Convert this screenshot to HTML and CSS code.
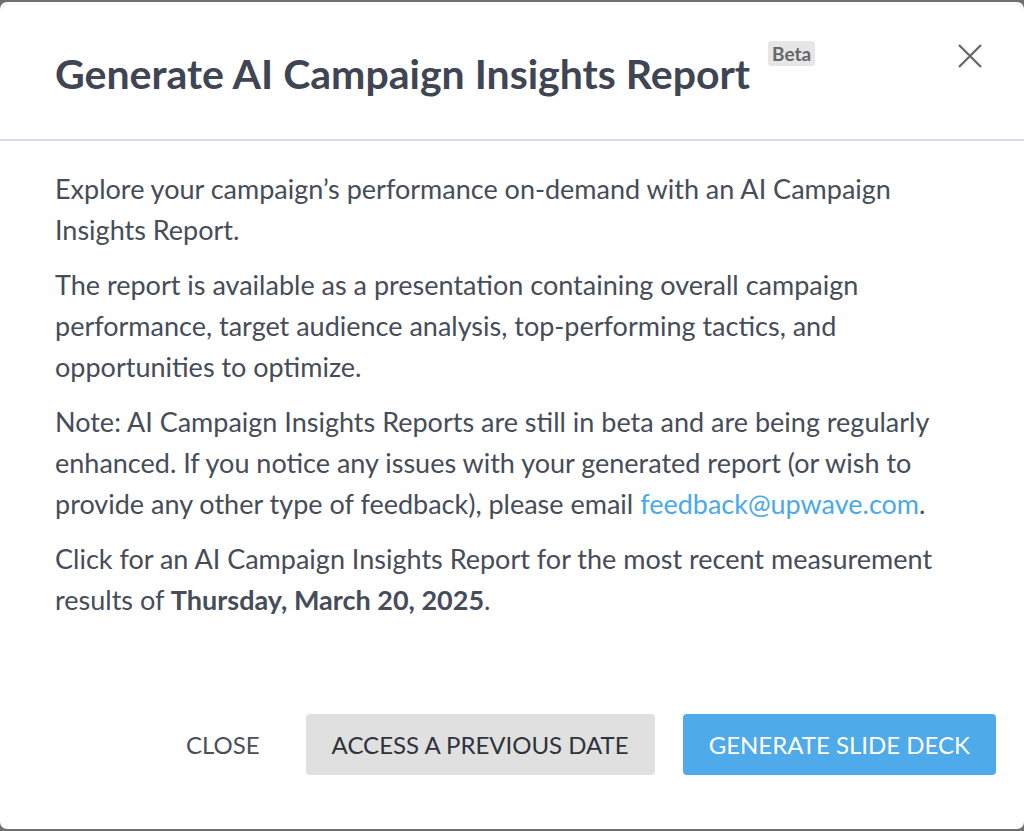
FILE: index.html
```html
<!DOCTYPE html>
<html>
<head>
<meta charset="utf-8">
<link rel="stylesheet" href="styles.css">
</head>
<body>
<div class="modal">
  <header class="modal-header">
    <h1 class="title">Generate AI Campaign Insights Report <span class="badge">Beta</span></h1>
    <button class="close-x" aria-label="Close">
      <svg width="26" height="26" viewBox="0 0 26 26"><path d="M2 2 L24 24 M24 2 L2 24" stroke="#6b6b6b" stroke-width="2.4" fill="none"/></svg>
    </button>
  </header>
  <section class="modal-body">
    <p>Explore your campaign’s performance on-demand with an AI Campaign Insights Report.</p>
    <p>The report is available as a presentation containing overall campaign performance, target audience analysis, top-performing tactics, and opportunities to optimize.</p>
    <p>Note: AI Campaign Insights Reports are still in beta and are being regularly enhanced. If you notice any issues with your generated report (or wish to provide any other type of feedback), please email <a href="#">feedback@upwave.com</a>.</p>
    <p>Click for an AI Campaign Insights Report for the most recent measurement results of <strong>Thursday, March 20, 2025</strong>.</p>
  </section>
  <footer class="modal-footer">
    <button class="btn btn-text">CLOSE</button>
    <button class="btn btn-gray">ACCESS A PREVIOUS DATE</button>
    <button class="btn btn-blue">GENERATE SLIDE DECK</button>
  </footer>
</div>
</body>
</html>
```
FILE: styles.css
```css
html, body {
  margin: 0;
  padding: 0;
  height: 831px;
  overflow: hidden;
}
body {
  background: #707070;
  font-family: Lato, "Open Sans", sans-serif;
  padding-top: 2px;
  box-sizing: border-box;
}
.modal {
  background: #fff;
  height: 827px;
  border-radius: 7px;
  display: flex;
  flex-direction: column;
}
.modal-header {
  height: 137px;
  border-bottom: 2px solid #d3deea;
  display: flex;
  align-items: flex-start;
  justify-content: space-between;
  padding: 0 41px 0 55px;
  box-sizing: content-box;
}
.title {
  margin: 46px 0 0;
  font-size: 41px;
  font-weight: 700;
  color: #3f4552;
  line-height: 52px;
  letter-spacing: 0;
  display: flex;
  align-items: flex-start;
}
.badge {
  margin-left: 18px;
  margin-top: -7px;
  background: #e6e6e6;
  color: #666;
  font-size: 19px;
  font-weight: 700;
  line-height: 25px;
  padding: 0 4px;
  border-radius: 3px;
}
.close-x {
  margin-top: 41px;
  background: none;
  border: 0;
  padding: 0;
  width: 26px;
  height: 26px;
}
.modal-body {
  padding: 27px 55px 0;
  flex: 1;
}
.modal-body p {
  margin: 0 0 14px;
  font-size: 27px;
  line-height: 41px;
  color: #464c58;
}
.modal-body a {
  color: #4aa9e8;
  text-decoration: none;
}
.modal-body strong {
  font-weight: 700;
}
.modal-footer {
  display: flex;
  justify-content: flex-end;
  align-items: center;
  gap: 28px;
  padding: 0 28px 54px;
}
.btn {
  font-family: Lato, "Open Sans", sans-serif;
  font-size: 24px;
  height: 61px;
  border: 0;
  border-radius: 4px;
  padding: 0 26px;
  color: #2f333a;
  letter-spacing: 0;
}
.btn-text {
  background: none;
  color: #4a4f5a;
  margin-right: -8px;
}
.btn-gray {
  background: #e0e0e0;
}
.btn-blue {
  background: #4eaae8;
  color: #fff;
}
```
